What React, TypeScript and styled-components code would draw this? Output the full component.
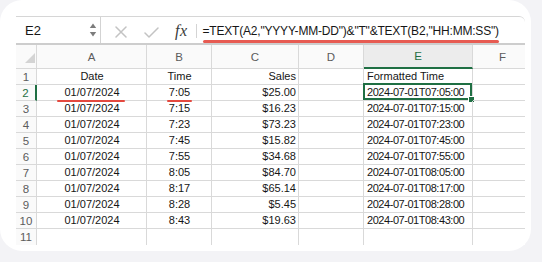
import React from "react";
import styled, { createGlobalStyle, css } from "styled-components";

const GlobalStyle = createGlobalStyle`
  html, body { margin: 0; padding: 0; background: #f3f3f6; }
  body {
    width: 542px; height: 262px; overflow: hidden;
    font-family: "Liberation Sans", Arial, sans-serif;
    color: #161616;
  }
`;

const GREEN = "#1f6f43";
const GRID = "#d9d9d9";
const RED = "#e4493f";

const Card = styled.div`
  width: 531px;
  height: 251px;
  box-sizing: border-box;
  background: #ffffff;
  border-radius: 22px;
  padding: 16px 6px 0 16px;
`;

const Panel = styled.div`
  width: 509px;
  height: 229px;
  display: flex;
  flex-direction: column;
  overflow: hidden;
  border-top: 1px solid #d6d6d6;
  border-top-right-radius: 6px;
  box-sizing: border-box;
  background: #fff;
`;

const FormulaBar = styled.div`
  display: flex;
  align-items: center;
  height: 28px;
  flex: none;
  box-sizing: border-box;
  border-bottom: 2px solid #cdcdcd;
`;

const NameBox = styled.div`
  width: 85px;
  height: 100%;
  box-sizing: border-box;
  border-right: 1px solid #d3d3d3;
  display: flex;
  align-items: center;
  justify-content: space-between;
  padding: 0 3px 0 9px;
  font-size: 13px;
`;

const Tool = styled.span<{ $ml: number }>`
  display: flex;
  align-items: center;
  margin-left: ${(p) => p.$ml}px;
  margin-top: 4px;
`;

const Fx = styled.span`
  font-family: "Liberation Serif", "Times New Roman", serif;
  font-style: italic;
  font-size: 16px;
  color: #3a3a3a;
  margin-left: 16px;
  margin-top: 2px;
  letter-spacing: 0.5px;
`;

const Divider = styled.span`
  width: 1px;
  height: 14px;
  background: #d4d4d4;
  margin-left: 8px;
  margin-top: 2px;
`;

const Formula = styled.span`
  position: relative;
  margin-left: 6px;
  font-size: 12px;
  letter-spacing: -0.2px;
  line-height: 14px;
  margin-top: 1px;
  white-space: nowrap;
  &::after {
    content: "";
    position: absolute;
    left: 0;
    right: 0;
    bottom: -5px;
    height: 2.5px;
    border-radius: 2px;
    background: ${RED};
    opacity: 0.9;
  }
`;

const Grid = styled.div`
  display: grid;
  grid-template-columns: 21px 110px 65px 87px 65px 109px 60px;
  grid-template-rows: 24px repeat(11, 16px);
`;

const HeaderCell = styled.div<{ $selected?: boolean }>`
  box-sizing: border-box;
  display: flex;
  align-items: center;
  justify-content: center;
  font-size: 11.5px;
  color: #5c5c5c;
  background: #fafafa;
  border-right: 1px solid ${GRID};
  border-bottom: 1px solid ${GRID};
  ${(p) =>
    p.$selected &&
    css`
      background: #ececec;
      color: ${GREEN};
      border-bottom: 2px solid ${GREEN};
    `}
`;

const Corner = styled(HeaderCell)`
  align-items: flex-end;
  justify-content: flex-end;
  padding: 0 1px 5px 0;
`;

const RowHead = styled.div<{ $selected?: boolean; $last?: boolean }>`
  box-sizing: border-box;
  display: flex;
  align-items: center;
  justify-content: center;
  font-size: 11.5px;
  color: #5c5c5c;
  background: #fafafa;
  border-right: 1px solid ${GRID};
  border-bottom: ${(p) => (p.$last ? "none" : `1px solid ${GRID}`)};
  ${(p) =>
    p.$selected &&
    css`
      color: ${GREEN};
      border-right: 2px solid ${GREEN};
    `}
`;

const Cell = styled.div<{
  $align?: "left" | "center" | "right";
  $tight?: boolean;
  $last?: boolean;
  $active?: boolean;
}>`
  position: relative;
  box-sizing: border-box;
  display: flex;
  align-items: center;
  justify-content: ${(p) =>
    p.$align === "right" ? "flex-end" : p.$align === "center" ? "center" : "flex-start"};
  padding: 0 2px 0 3px;
  font-size: 11px;
  line-height: 15px;
  white-space: nowrap;
  letter-spacing: ${(p) => (p.$tight ? "-0.45px" : "0")};
  border-right: 1px solid ${GRID};
  border-bottom: ${(p) => (p.$last ? "none" : `1px solid ${GRID}`)};
  ${(p) =>
    p.$active &&
    css`
      &::before {
        content: "";
        position: absolute;
        top: -2px;
        left: -1px;
        right: 0;
        bottom: 0;
        border: 2px solid ${GREEN};
        pointer-events: none;
      }
      &::after {
        content: "";
        position: absolute;
        right: -3px;
        bottom: -3px;
        width: 5px;
        height: 5px;
        background: ${GREEN};
        border: 1px solid #fff;
      }
    `}
`;

const Marked = styled.span<{ $l: number; $r: number }>`
  position: relative;
  &::after {
    content: "";
    position: absolute;
    left: ${(p) => -p.$l}px;
    right: ${(p) => -p.$r}px;
    bottom: -2px;
    height: 2px;
    border-radius: 2px;
    background: ${RED};
  }
`;

const Stepper = () => (
  <svg width="8" height="16" viewBox="0 0 8 16">
    <path d="M4 1.5 L7.2 6 L0.8 6 Z" fill="#7c7c7c" />
    <path d="M4 14.5 L7.2 10 L0.8 10 Z" fill="#7c7c7c" />
  </svg>
);

const Cross = () => (
  <svg width="12" height="12" viewBox="0 0 12 12">
    <path d="M1 1 L11 11 M11 1 L1 11" stroke="#c3c3c3" strokeWidth="1.5" strokeLinecap="round" />
  </svg>
);

const Check = () => (
  <svg width="15" height="11" viewBox="0 0 15 11">
    <path d="M1 6 L5 10 L14 1" stroke="#c3c3c3" strokeWidth="1.5" fill="none" strokeLinecap="round" strokeLinejoin="round" />
  </svg>
);

const SelectAll = () => (
  <svg width="10" height="10" viewBox="0 0 10 10">
    <path d="M10 0 L10 10 L0 10 Z" fill="#d4d4d4" />
  </svg>
);

const times = ["7:05", "7:15", "7:23", "7:45", "7:55", "8:05", "8:17", "8:28", "8:43"];
const sales = ["$25.00", "$16.23", "$73.23", "$15.82", "$34.68", "$84.70", "$65.14", "$5.45", "$19.63"];
const cols = ["A", "B", "C", "D", "E", "F"];

export default function App() {
  const rows: React.ReactNode[] = [];

  // Row 1 headers
  rows.push(
    <RowHead key="h1">1</RowHead>,
    <Cell key="a1" $align="center">Date</Cell>,
    <Cell key="b1" $align="center">Time</Cell>,
    <Cell key="c1" $align="right">Sales</Cell>,
    <Cell key="d1" />,
    <Cell key="e1">Formatted Time</Cell>,
    <Cell key="f1" />
  );

  times.forEach((t, i) => {
    const r = i + 2;
    const first = i === 0;
    const hhmm = t.length === 4 ? `0${t}` : t;
    rows.push(
      <RowHead key={`h${r}`} $selected={first}>{r}</RowHead>,
      <Cell key={`a${r}`} $align="center">
        {first ? <Marked $l={7} $r={5}>01/07/2024</Marked> : "01/07/2024"}
      </Cell>,
      <Cell key={`b${r}`} $align="center">
        {first ? <Marked $l={2} $r={2}>{t}</Marked> : t}
      </Cell>,
      <Cell key={`c${r}`} $align="right">{sales[i]}</Cell>,
      <Cell key={`d${r}`} />,
      <Cell key={`e${r}`} $tight $active={first}>{`2024-07-01T${hhmm}:00`}</Cell>,
      <Cell key={`f${r}`} />
    );
  });

  rows.push(
    <RowHead key="h11" $last>11</RowHead>,
    ...[0, 1, 2, 3, 4, 5].map((c) => <Cell key={`r11${c}`} $last />)
  );

  return (
    <>
      <GlobalStyle />
      <Card>
        <Panel>
          <FormulaBar>
            <NameBox>
              <span>E2</span>
              <Stepper />
            </NameBox>
            <Tool $ml={14}><Cross /></Tool>
            <Tool $ml={17}><Check /></Tool>
            <Fx>fx</Fx>
            <Divider />
            <Formula>=TEXT(A2,"YYYY-MM-DD")&amp;"T"&amp;TEXT(B2,"HH:MM:SS")</Formula>
          </FormulaBar>
          <Grid>
            <Corner><SelectAll /></Corner>
            {cols.map((c) => (
              <HeaderCell key={c} $selected={c === "E"}>{c}</HeaderCell>
            ))}
            {rows}
          </Grid>
        </Panel>
      </Card>
    </>
  );
}
